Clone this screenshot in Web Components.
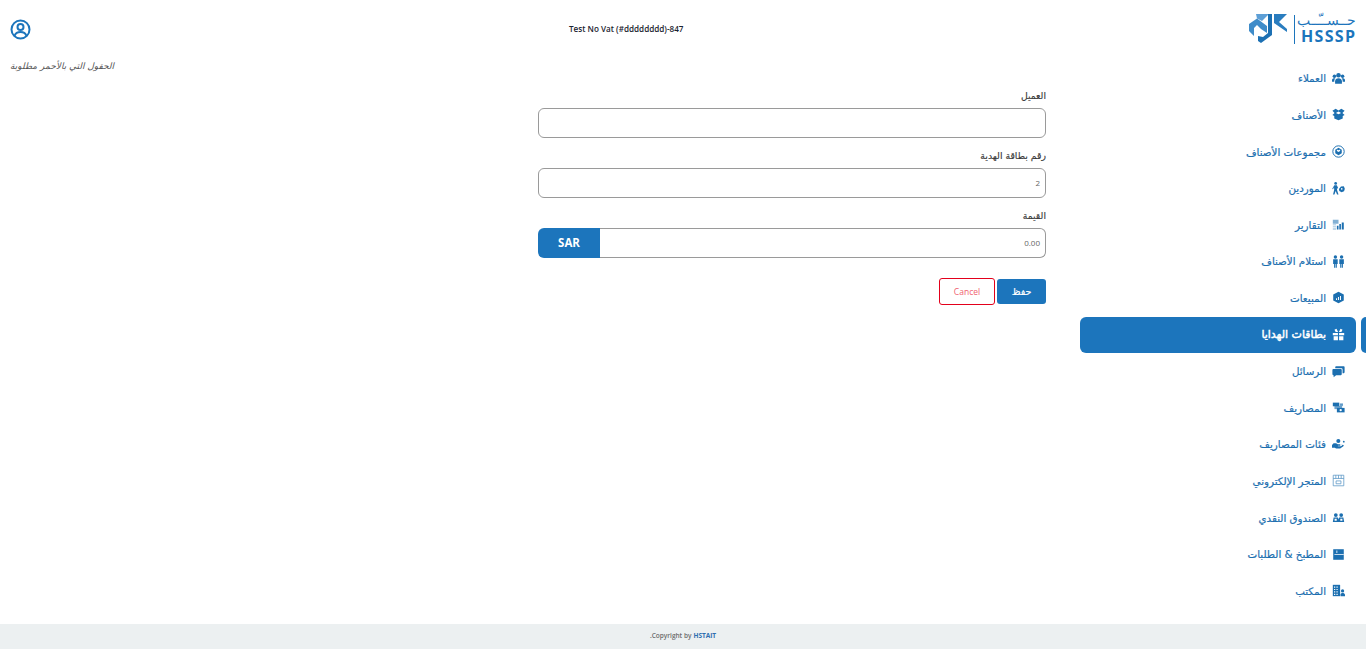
<!DOCTYPE html>
<html lang="ar" dir="rtl">
<head>
<meta charset="utf-8">
<title>HSSSP</title>
<style>
html,body{margin:0;padding:0;background:#fff;height:650px;overflow:hidden}
body{font-family:"Open Sans","Noto Sans","DejaVu Sans",sans-serif}
</style>
</head>
<body>
<app-shell>
  <side-nav slot="side"></side-nav>
  <top-bar slot="top"></top-bar>
  <gift-form slot="main"></gift-form>
  <page-footer slot="foot"></page-footer>
</app-shell>
<script>
const I={
users:'<circle cx="8" cy="4" r="2.800"/><circle cx="3" cy="5.200" r="2.200"/><circle cx="13" cy="5.200" r="2.200"/><path d="M3.800 14.500v-3C3.800 9.300 5.700 7.800 8 7.800s4.200 1.500 4.200 3.700v3z"/><path d="M0 12v-2C0 8.500 1.300 7.800 3.200 7.800l1 .3C3 9 2.800 10.300 2.800 12zM16 12v-2c0-1.500-1.300-2.200-3.200-2.200l-1 .3c1.200.9 1.400 2.200 1.400 3.900z"/>',
box:'<path d="M8 3.200 4.500 1 .5 3.400 3.200 6 .5 8.500 2.800 9.800V13l5.200 2.200 5.200-2.200V9.800l2.300-1.300L12.800 6l2.700-2.600L11.500 1zM8 4.400 11.200 6 8 7.800 4.800 6z"/>',
group:'<circle cx="8" cy="8" r="7" fill="none" stroke="currentColor" stroke-width="1.200"/><path d="M8 3.500 12 5.800v4.400L8 12.500 4 10.200V5.800z"/><path d="M8 6.500 6 5.500v2L8 8.700l2-1.200v-2z" fill="#fff"/>',
supp:'<circle cx="4.500" cy="1.800" r="1.700"/><path d="M2.800 4h3.200l1.500 3.500-1.200.7L6 7.500 6.300 10 8 15.500H6.200L4.500 11 3 15.500H1.300L2.700 9.500 2.500 6.500 1.300 9 .2 8.500z"/><path d="M8.500 8.500l2.500-3 3.500-.2 1.300 3-1 3.200-3 1.200-2.800-1.500z"/><circle cx="12" cy="8.500" r="1" fill="#fff"/>',
rep:'<path d="M1 2h7v5H1zM1 8h4v1H1zM1 10.500h4v1H1zM1 13h4v1H1z" opacity=".55"/><path d="M6 9.500H8V14H6zM9 7.500h2V14H9zM12 5.500h2.500V14H12z"/>',
recv:'<circle cx="4.200" cy="2.500" r="2.100"/><circle cx="11.800" cy="2.500" r="2.100"/><path d="M1.400 5.300h5.600V11H6v4.700H5V11H4.300v4.700H2.600V11H1.400zM9 5.300h5.600V11h-1.200v4.700h-1.700V11H11v4.700h-1V11H9z"/>',
sales:'<path d="M8 .8 14.500 4.400v7.200L8 15.200 1.500 11.600V4.400z"/><path d="M5 11V9h1.200v2zM7.400 11V7.500h1.200V11zM9.800 11V6H11v5z" fill="#fff"/>',
gift:'<path d="M1 6h6.300v3H1zM8.700 6H15v3H8.700zM2 10h5.300v5H2zM8.700 10H14v5H8.700z"/><path d="M7.500 5 5.500 1 3 2l1.500 3zM8.500 5l2-4L13 2l-1.500 3z"/>',
msg:'<path d="M5 1.500h9.500c.6 0 1 .4 1 1V9c0 .6-.4 1-1 1H13V5.500C13 4.500 12.500 4 11.500 4H4V2.500c0-.6.4-1 1-1z"/><path d="M1.500 5H11c.6 0 1 .4 1 1v5.500c0 .6-.4 1-1 1H5l-3 2.500v-2.500h-.5c-.6 0-1-.4-1-1V6c0-.6.4-1 1-1z"/>',
exp:'<path d="M1 2h8v4.500H1z"/><path d="M3 6h9.500v4H3z" opacity=".65"/><path d="M6 8.500h9.500V14H6z"/><circle cx="10.700" cy="11.300" r="1.400" fill="#fff"/><path d="M9.800 3h3.700v3H9.800z" opacity=".7"/>',
cat:'<path d="M0 8.500l2-2h3l2.200 1.200h3v1.800H7.200v.8H11l1.800-1.300L11 8.300l3.500.2-.5 1.800L10 13H5l-1.500-1H0z"/><circle cx="7.800" cy="3.800" r="2.500"/><circle cx="14.500" cy="4.500" r="1.100"/>',
store:'<g fill="none" stroke="currentColor" stroke-width=".9" opacity=".75"><path d="M1.500 1.500h13v13h-13zM1.500 5.500h13M4.700 1.500v4M8 1.500v4M11.300 1.500v4"/><path d="M5 8.500h6v3.500H5z"/></g>',
cash:'<circle cx="4.700" cy="5" r="2.300"/><circle cx="11.300" cy="5" r="2.300"/><path d="M1 13.500l1-5.500h5.300l.7 2.500.7-2.500H14l1 5.500z"/><path d="M3.200 9.500h2.600v2.500H3.200zM10.200 9.500h2.600v2.500h-2.600z" fill="#fff"/>',
kitchen:'<path d="M1.500 1.500h13v13h-13z"/><path d="M3 7.300h11.500v1H3zM5.500 3h1v3h-1z" fill="#fff"/>',
office:'<path d="M1 1h9v14H1z"/><path d="M2.500 3H4v1.500H2.500zM5.500 3H7v1.500H5.500zM2.500 6H4v1.500H2.500zM5.500 6H7v1.500H5.500zM2.500 9H4v1.500H2.500zM5.500 9H7v1.500H5.500zM2.500 12H4v1.500H2.500zM5.500 12H7v1.500H5.500z" fill="#fff"/><circle cx="13" cy="8.500" r="2"/><path d="M10.500 15v-2c0-1.200 1.100-2 2.500-2s3 .8 3 2v2z"/>'
};
const ITEMS=[['العملاء','users'],['الأصناف','box'],['مجموعات الأصناف','group'],['الموردين','supp'],['التقارير','rep'],['استلام الأصناف','recv'],['المبيعات','sales'],['بطاقات الهدايا','gift',1],['الرسائل','msg'],['المصاريف','exp'],['فئات المصاريف','cat'],['المتجر الإلكتروني','store'],['الصندوق النقدي','cash'],['المطبخ & الطلبات','kitchen'],['المكتب','office']];

class AppShell extends HTMLElement{constructor(){super();this.attachShadow({mode:'open'}).innerHTML=`<style>
:host{display:grid;width:1366px;height:649px;grid-template-columns:286px 1fr;grid-template-rows:1fr 25px;grid-template-areas:"side content" "foot foot"}
.side{grid-area:side;min-height:0}.content{grid-area:content;min-width:0;display:flex;flex-direction:column}
.foot{grid-area:foot}
</style><div class="side"><slot name="side"></slot></div><div class="content"><slot name="top"></slot><slot name="main"></slot></div><div class="foot"><slot name="foot"></slot></div>`}}

class SideNav extends HTMLElement{constructor(){super();this.attachShadow({mode:'open'}).innerHTML=`<style>
:host{display:block;font-family:"DejaVu Sans",sans-serif}
.logo{height:60.400px;box-sizing:border-box;padding:11px 10px 0 0;display:flex;align-items:flex-start;gap:6px;color:#1c75bc}
.logo svg{width:39px;height:29px;flex:none;margin-top:3px}
.div{width:1px;height:29px;background:#1c75bc;margin-top:4px}
.word{display:flex;flex-direction:column;align-items:flex-start;width:55px;direction:ltr;gap:0}
.ar{font:300 14px/18px "DejaVu Sans",sans-serif;direction:rtl;width:55px;text-align:center;white-space:nowrap}
.en{font:700 16px/15px "Open Sans",sans-serif;letter-spacing:1.300px;white-space:nowrap}
nav{display:flex;flex-direction:column;gap:.6px}
a{height:36px;display:flex;align-items:center;position:relative;margin-right:10px;padding-right:11.500px;border-radius:6px;gap:5.500px;color:#1c6fb0;font-size:10.300px;font-weight:400;-webkit-text-stroke:.2px currentColor;text-decoration:none;box-sizing:border-box}
a svg{width:13px;height:13px;flex:none;fill:currentColor;stroke:none}
a.on{background:#1c75bc;color:#fff;font-size:11px;-webkit-text-stroke:.45px #fff}
a.on::after{content:"";position:absolute;right:-10px;top:0;bottom:0;width:5px;background:#1c75bc;border-radius:5px 0 0 5px}
</style>
<div class="logo">
<div class="word"><span class="ar">حــســّــب</span><span class="en">HSSSP</span></div>
<div class="div"></div>
<svg viewBox="0 0 39 29"><path fill="#5d9fd6" d="M7 0h13l-7 7-5-2.500z"/><path fill="#3f8cc9" d="M0 10l8-5.500L18 12v7l-6-4-4-4-3 3v8l-5-5z"/><path fill="#1c70b3" d="M19 0h4v21l-11 8-3-2v-5l5 1 5-4z"/><path fill="#2a7dbf" d="M25 0h13l-8 8 8 7v3L25 9z"/></svg>
</div>
<nav>${ITEMS.map(([t,i,on])=>`<a class="${on?'on':''}"><svg viewBox="0 0 16 16">${I[i]}</svg><span>${t}</span></a>`).join('')}</nav>`}}

class TopBar extends HTMLElement{constructor(){super();this.attachShadow({mode:'open'}).innerHTML=`<style>
:host{display:block;height:59px;position:relative}
.row{display:flex;align-items:center;height:59px;padding:0 10px;box-sizing:border-box;justify-content:flex-end}
.user{width:21px;height:21px;color:#1c75bc}
.ttl{position:absolute;left:569px;top:23px;font:600 8.150px/11px "Open Sans",sans-serif;color:#1b2430;direction:ltr;white-space:nowrap}
</style><div class="row"><svg class="user" viewBox="0 0 21 21" fill="none" stroke="currentColor" stroke-width="2"><circle cx="10.500" cy="10.500" r="9"/><circle cx="10.500" cy="8" r="3"/><path d="M4.500 16.800c1-2.600 3-3.800 6-3.800s5 1.200 6 3.800"/></svg></div><span class="ttl">Test No Vat (#dddddddd)-847</span>`}}

class FormField extends HTMLElement{constructor(){super();const v=this.getAttribute('value')||'',s=this.hasAttribute('suffix');this.attachShadow({mode:'open'}).innerHTML=`<style>
:host{display:block}
label{display:block;height:17px;font:400 9.300px/10px "DejaVu Sans",sans-serif;-webkit-text-stroke:.15px #3a3a3a;color:#3a3a3a;text-align:right}
.box{display:flex;height:30px;box-sizing:border-box;direction:rtl}
.in{flex:1;min-width:0;border:1px solid #9a9a9a;border-radius:6px;padding:0 5px;display:flex;align-items:center;font:400 8px/1 "Open Sans",sans-serif;color:#666;box-sizing:border-box}
.suf .in{border-radius:0 6px 6px 0;border-left:0}
.add{width:62px;background:#1c75bc;color:#fff;font:700 11.500px/30px "Open Sans",sans-serif;text-align:center;border-radius:6px 0 0 6px;direction:ltr}
</style><label><slot></slot></label><div class="box ${s?'suf':''}"><div class="in">${v}</div>${s?`<div class="add">${this.getAttribute('suffix')}</div>`:''}</div>`}}

class GiftForm extends HTMLElement{constructor(){super();this.attachShadow({mode:'open'}).innerHTML=`<style>
:host{display:block;position:relative;flex:1}
.note{font:italic 400 9px/12px "DejaVu Sans",sans-serif;color:#555;position:absolute;left:10px;top:1px}
.form{width:508px;margin:0 34px 0 0;padding-top:32px;display:flex;flex-direction:column;gap:13px}
.btns{display:flex;gap:2px;margin-top:8px}
button{all:unset;box-sizing:border-box;height:25px;text-align:center}
.save{width:49px;background:#1c75bc;color:#fff;border-radius:3px;font:400 9.500px/25px "DejaVu Sans",sans-serif;-webkit-text-stroke:.2px #fff}
.cancel{width:56px;height:27px;margin-top:-1px;border:1px solid #e3001b;border-radius:3px;color:#ef5f6f;font:400 8.500px/25px "Open Sans",sans-serif}
</style><div class="note">الحقول التي بالأحمر مطلوبة</div>
<div class="form">
<form-field>العميل</form-field>
<form-field value="2">رقم بطاقة الهدية</form-field>
<form-field value="0.00" suffix="SAR">القيمة</form-field>
<div class="btns"><button class="save">حفظ</button><button class="cancel">Cancel</button></div>
</div>`}}

class PageFooter extends HTMLElement{constructor(){super();this.attachShadow({mode:'open'}).innerHTML=`<style>
:host{display:flex;height:25px;background:#ecf0f1;align-items:center;justify-content:center;font:600 6.500px/1 "Open Sans",sans-serif;color:#6b6b6b;direction:ltr}
b{color:#2f6fb0;font-weight:700;margin-left:2px}
</style><span>.Copyright by<b>HSTAIT</b></span>`}}

customElements.define('form-field',FormField);
customElements.define('app-shell',AppShell);
customElements.define('side-nav',SideNav);
customElements.define('top-bar',TopBar);
customElements.define('gift-form',GiftForm);
customElements.define('page-footer',PageFooter);
</script>
</body>
</html>
